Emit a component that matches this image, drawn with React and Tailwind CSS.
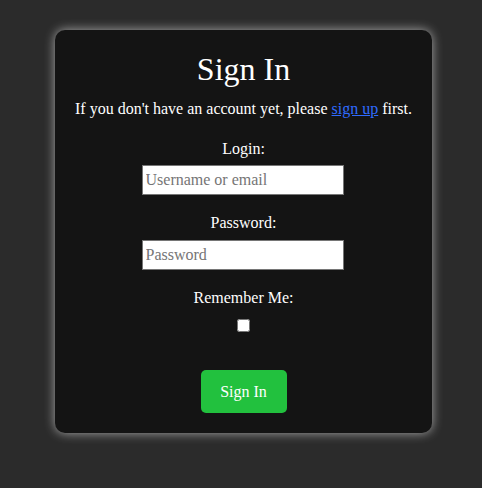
import React from 'react';

function App() {
  return (
    <div className="min-h-[488px] bg-[#2b2b2b] pt-[30px] pb-[55px] font-['Liberation_Serif',serif] text-white">
      <div className="ml-[55px] w-[377px] rounded-[10px] bg-[#141414] pt-[21px] pb-[20px] shadow-[0_0_11px_rgba(255,255,255,0.6)] flex flex-col items-center">
        <h1 className="text-[32px] leading-[37px] m-0">Sign In</h1>
        <p className="mt-[12px] text-[16px] leading-[18px]">
          If you don't have an account yet, please{' '}
          <a href="#" className="text-[#2f6bff] underline">sign up</a> first.
        </p>

        {/* Login */}
        <label className="mt-[22px] text-[16px] leading-[18px]">Login:</label>
        <input
          type="text"
          placeholder="Username or email"
          className="mt-[7px] -translate-x-px w-[202px] h-[30px] bg-white border border-[#767676] px-[3px] text-[16px] text-black placeholder:text-[#757575] font-['Liberation_Serif',serif] outline-none"
        />

        {/* Password */}
        <label className="mt-[19px] text-[16px] leading-[18px]">Password:</label>
        <input
          type="password"
          placeholder="Password"
          className="mt-[8px] -translate-x-px w-[202px] h-[30px] bg-white border border-[#767676] px-[3px] text-[16px] text-black placeholder:text-[#757575] font-['Liberation_Serif',serif] outline-none"
        />

        <label className="mt-[19px] text-[16px] leading-[18px]">Remember Me:</label>
        <input type="checkbox" className="mt-[12px] w-[13px] h-[13px]" />

        <button className="mt-[38px] w-[86px] h-[43px] rounded-[5px] bg-[#22c13e] text-white text-[16px] font-['Liberation_Serif',serif]">
          Sign In
        </button>
      </div>
    </div>
  );
}

export default App;
